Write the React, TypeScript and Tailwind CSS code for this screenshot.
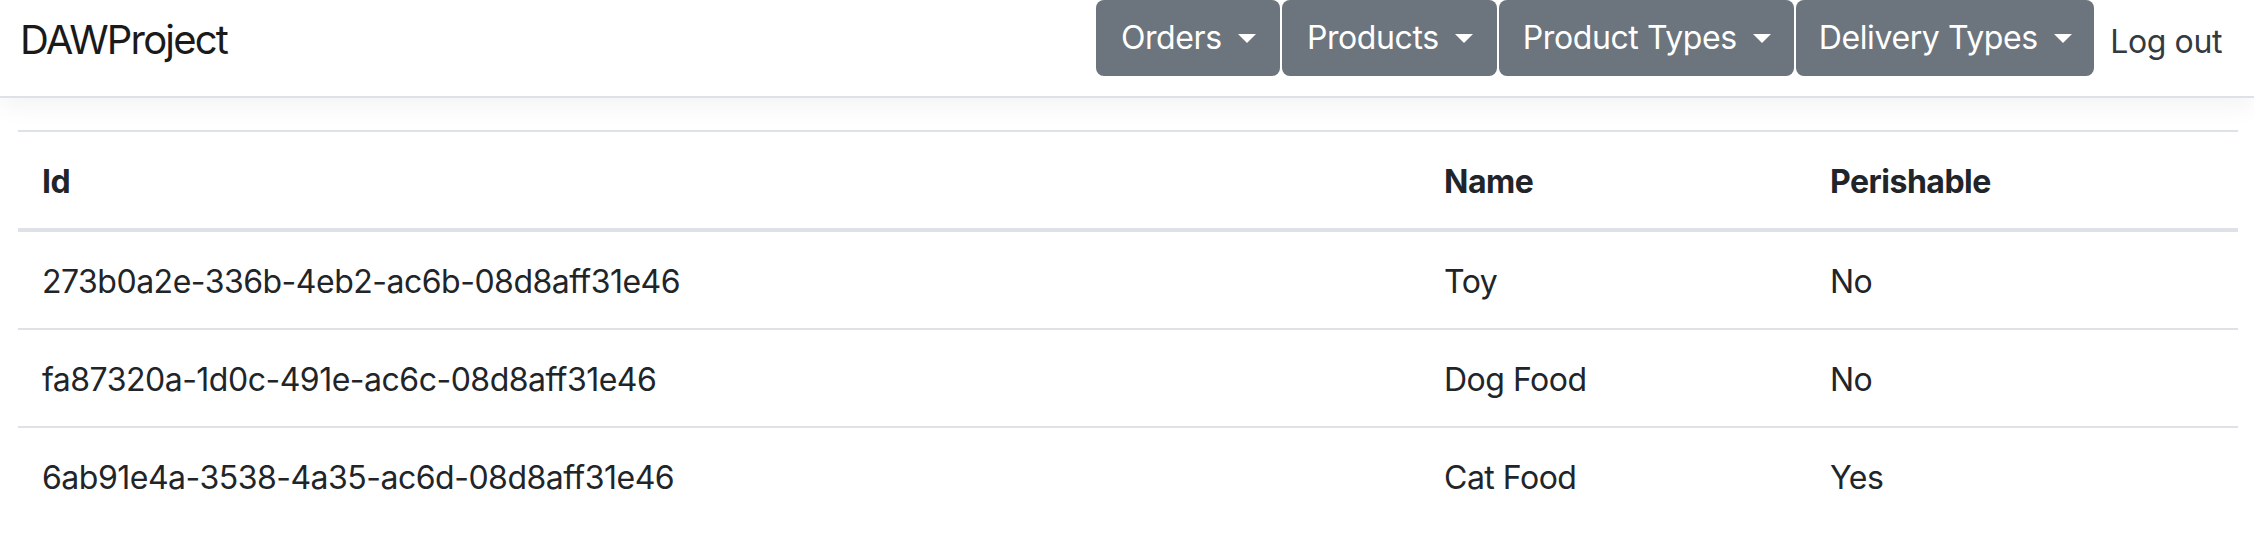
import { useState } from "react";

type ProductType = {
  id: string;
  name: string;
  perishable: boolean;
};

const productTypes: ProductType[] = [
  { id: "273b0a2e-336b-4eb2-ac6b-08d8aff31e46", name: "Toy", perishable: false },
  { id: "fa87320a-1d0c-491e-ac6c-08d8aff31e46", name: "Dog Food", perishable: false },
  { id: "6ab91e4a-3538-4a35-ac6d-08d8aff31e46", name: "Cat Food", perishable: true },
];

const menus = [
  { label: "Orders", width: "w-[184px]" },
  { label: "Products", width: "w-[215px]" },
  { label: "Product Types", width: "w-[295px]" },
  { label: "Delivery Types", width: "w-[298px]" },
];

const DropdownButton = ({ label, width }: { label: string; width: string }) => {
  return (
    <button
      className={`${width} h-[76px] rounded-[8px] bg-[#6c757d] text-white text-[32px] leading-[48px] tracking-[-0.4px] flex items-center justify-center gap-[16px] cursor-pointer`}
    >
      {label}
      <span className="w-0 h-0 border-t-[9px] border-t-white border-x-[9px] border-x-transparent" />
    </button>
  );
};

const Navbar = () => {
  return (
    <nav className="relative z-10 h-[98px] bg-white border-b-2 border-[#dee2e6] shadow-[0_8px_24px_rgba(0,0,0,0.05)] flex items-start justify-between pl-[20px] pr-[16px]">
      <a className="mt-[10px] text-[40px] leading-[60px] text-[#1a1a1a] tracking-[-1.8px]">DAWProject</a>
      <div className="flex items-start gap-[2px]">
        {menus.map((m) => (
          <DropdownButton key={m.label} label={m.label} width={m.width} />
        ))}
        <a className="ml-[-2px] mt-[18px] px-[16px] text-[32px] leading-[48px] tracking-[-0.4px] text-[#343a40]">Log out</a>
      </div>
    </nav>
  );
};

export default function App() {
  const [rows] = useState(productTypes);

  return (
    <div className="min-h-screen bg-white text-[#212529] font-['Inter','Liberation_Sans',sans-serif]">
      <Navbar />
      <main className="mt-[32px] pl-[18px] pr-[16px]">
        <table className="w-full table-fixed border-separate border-spacing-0 text-[32px] leading-[48px] tracking-[-0.5px]">
          <thead>
            <tr>
              <th className="w-[1402px] text-left font-bold px-[24px] pt-[26px] pb-[22px] border-t-2 border-b-4 border-[#dee2e6]">Id</th>
              <th className="w-[386px] text-left font-bold px-[24px] pt-[26px] pb-[22px] border-t-2 border-b-4 border-[#dee2e6]">Name</th>
              <th className="text-left font-bold px-[24px] pt-[26px] pb-[22px] border-t-2 border-b-4 border-[#dee2e6]">Perishable</th>
            </tr>
          </thead>
          <tbody>
            {rows.map((r, i) => {
              const line = i < rows.length - 1 ? "border-b-2 border-[#dee2e6]" : "";
              return (
                <tr key={r.id}>
                  <td className={`px-[24px] pt-[26px] pb-[22px] ${line}`}>{r.id}</td>
                  <td className={`px-[24px] pt-[26px] pb-[22px] ${line}`}>{r.name}</td>
                  <td className={`px-[24px] pt-[26px] pb-[22px] ${line}`}>{r.perishable ? "Yes" : "No"}</td>
                </tr>
              );
            })}
          </tbody>
        </table>
      </main>
    </div>
  );
}
